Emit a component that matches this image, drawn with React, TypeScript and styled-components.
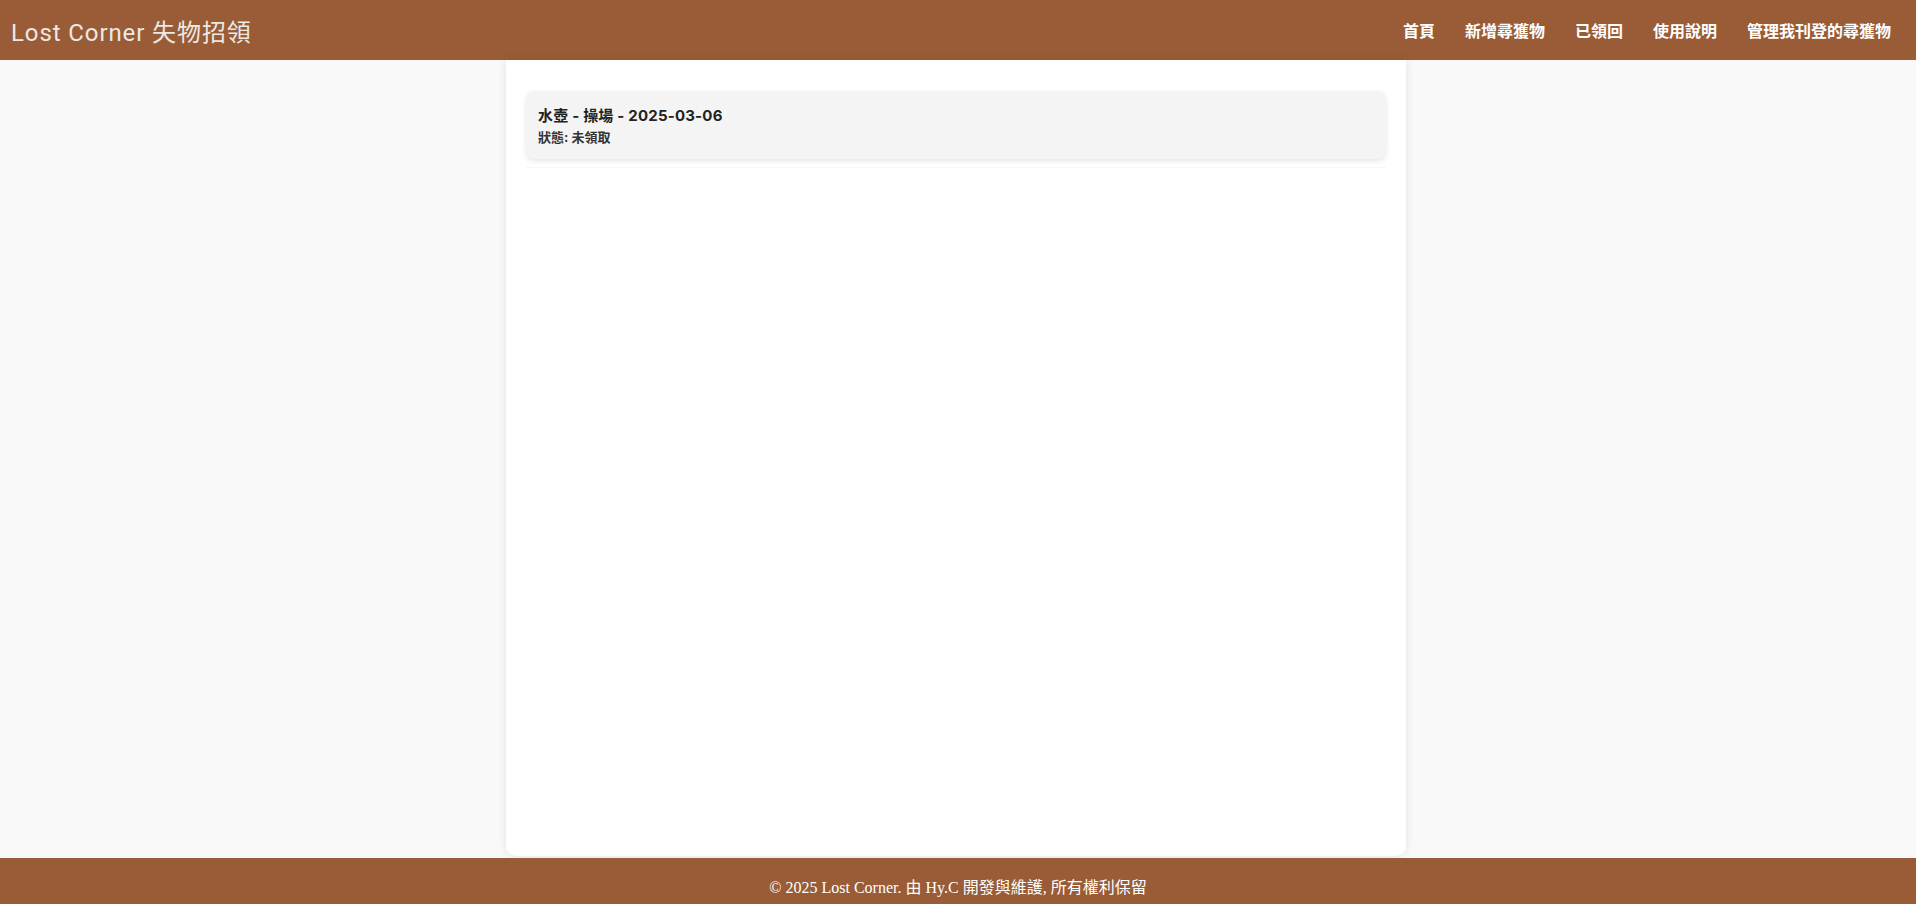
import styled, { createGlobalStyle } from "styled-components";

const brown = "#995c36";

const GlobalStyle = createGlobalStyle`
  * {
    box-sizing: border-box;
  }

  body {
    margin: 0;
    background: #f9f9f9;
    font-family: "Liberation Serif", "Noto Sans CJK TC", serif;
  }
`;

type Item = {
  name: string;
  place: string;
  date: string;
  status: string;
};

const items: Item[] = [
  { name: "水壺", place: "操場", date: "2025-03-06", status: "未領取" },
];

const navLinks = ["首頁", "新增尋獲物", "已領回", "使用說明", "管理我刊登的尋獲物"];

export default function App() {
  return (
    <>
      <GlobalStyle />
      <Page>
        <Header>
          <Logo>Lost Corner 失物招領</Logo>
          <Nav>
            {navLinks.map((link) => (
              <NavLink key={link} href="#">
                {link}
              </NavLink>
            ))}
          </Nav>
        </Header>

        <Main>
          <Panel>
            <ItemList>
              {items.map((item) => (
                <ItemCard key={item.name + item.date}>
                  <ItemTitle>
                    {item.name} - {item.place} - {item.date}
                  </ItemTitle>
                  <ItemStatus>狀態: {item.status}</ItemStatus>
                </ItemCard>
              ))}
            </ItemList>
          </Panel>
        </Main>

        <Footer>© 2025 Lost Corner. 由 Hy.C 開發與維護, 所有權利保留</Footer>
      </Page>
    </>
  );
}

const Page = styled.div`
  display: flex;
  flex-direction: column;
  min-height: 100vh;
`;

const Header = styled.header`
  display: flex;
  align-items: center;
  justify-content: space-between;
  height: 60px;
  padding: 0 10px 0 11px;
  background: ${brown};
`;

const Logo = styled.div`
  color: #ece8e4;
  font-family: Roboto, "Noto Sans CJK TC", sans-serif;
  font-size: 24px;
  letter-spacing: 0.9px;
`;

const Nav = styled.nav`
  display: flex;
  align-items: center;
`;

const NavLink = styled.a`
  padding: 0 15px;
  color: #fff;
  font-family: "Noto Sans CJK TC", sans-serif;
  font-size: 16px;
  font-weight: 700;
  text-decoration: none;
`;

const Main = styled.main`
  display: flex;
  justify-content: center;
  padding: 0 4px 2px 0;
`;

const Panel = styled.div`
  width: 900px;
  min-height: calc(100vh - 108px);
  padding: 20px;
  background: #fff;
  border-radius: 0 0 10px 10px;
  box-shadow: 0 0 10px rgba(0, 0, 0, 0.1);
`;

const ItemList = styled.div`
  padding: 11px 0 8px;
  border-bottom: 1px solid #f7f7f7;
`;

const ItemCard = styled.div`
  padding: 15px 12px 13px;
  background: #f4f4f4;
  border-radius: 8px;
  box-shadow: 0 2px 5px rgba(0, 0, 0, 0.1);
`;

const ItemTitle = styled.div`
  color: #222;
  font-family: Inter, "Noto Sans CJK TC", sans-serif;
  font-size: 15px;
  font-weight: 700;
  letter-spacing: 0.2px;
  line-height: 20px;
`;

const ItemStatus = styled.div`
  margin-top: 3px;
  color: #333;
  font-family: Inter, "Noto Sans CJK TC", sans-serif;
  font-size: 13px;
  font-weight: 700;
  line-height: 17px;
`;

const Footer = styled.footer`
  padding: 20px;
  background: ${brown};
  color: #fff;
  font-size: 16px;
  line-height: 20px;
  text-align: center;
`;
